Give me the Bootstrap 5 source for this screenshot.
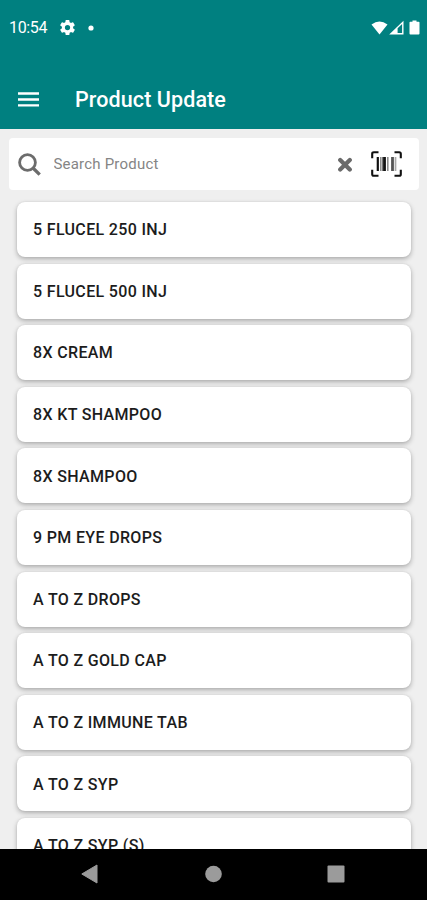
<!DOCTYPE html>
<html lang="en">
<head>
<meta charset="utf-8">
<meta name="viewport" content="width=device-width, initial-scale=1">
<title>Product Update</title>
<link href="https://cdn.jsdelivr.net/npm/bootstrap@5.3.0/dist/css/bootstrap.min.css" rel="stylesheet">
<style>
body{font-family:Roboto,"Liberation Sans",sans-serif;background:#efefef}
.screen{height:900px;width:427px}
.top-area{background:#008080;height:128.5px}
.status-row{height:55px;padding:0 6px 0 9px}
.clock{font-size:16px;letter-spacing:-.35px;width:51px;line-height:20px}
.status-dot{margin-left:13px}
.title-row{height:73px;padding:16px 19px 0 18px}
.page-title{font-size:21.5px;font-weight:500;line-height:28px;margin-left:36px;letter-spacing:.1px}
.search-box{height:52px;margin:9.5px 8px 0 9px;border-radius:4px;padding:0 17px 0 9px}
.search-box input{font-size:15px;letter-spacing:.2px;color:#777;line-height:20px;margin-left:12.5px}
.search-box input::placeholder{color:#858585;opacity:1}
.clear-icon{margin-right:18px}
.product-list{padding:12px 16px 0 17px;gap:6.6px;min-height:0}
.product{height:55px;border-radius:8px;padding:1.4px 0 0 16px;font-size:16px;font-weight:500;letter-spacing:.34px;color:#1c1c1c;box-shadow:0 2px 5px rgba(0,0,0,.28),0 0 2px rgba(0,0,0,.08)}
.system-nav{height:51px;padding:0 82px 1px 81px;background:#000}
</style>
</head>
<body>
<div class="screen d-flex flex-column overflow-hidden">
  <header class="top-area flex-shrink-0 text-white">
    <div class="status-row d-flex align-items-center">
      <span class="clock">10:54</span>
      <svg width="15" height="15" viewBox="2 2 20 20" fill="#fff"><path d="M19.4 13a7.500 7.500 0 0 0 0-2l2.100-1.650a.5.5 0 0 0 .12-.64l-2-3.460a.5.5 0 0 0-.61-.22l-2.490 1a7.300 7.300 0 0 0-1.690-.98l-.38-2.650A.5.5 0 0 0 14 2h-4a.5.5 0 0 0-.49.42l-.38 2.650c-.61.250-1.170.590-1.690.980l-2.490-1a.5.5 0 0 0-.61.220l-2 3.460a.5.5 0 0 0 .12.640L4.600 11a7.500 7.500 0 0 0 0 2l-2.140 1.650a.5.5 0 0 0-.12.640l2 3.460c.12.220.39.300.61.220l2.490-1c.52.400 1.080.730 1.690.980l.38 2.650c.03.240.24.400.49.400h4c.25 0 .46-.18.49-.42l.38-2.650c.61-.25 1.170-.59 1.690-.98l2.490 1c.23.090.49 0 .61-.22l2-3.460a.5.5 0 0 0-.12-.64zM12 15.500a3.500 3.500 0 1 1 0-7 3.500 3.500 0 0 1 0 7z" fill-rule="evenodd"/></svg>
      <svg class="status-dot" width="6" height="6"><circle cx="3" cy="3" r="2.600" fill="#fff"/></svg>
      <svg class="ms-auto" width="50" height="16" viewBox="0 0 50 16" fill="#fff"><path d="M.5 4.500Q8.500-1.500 16.500 4.500L8.500 14.500z"/><path fill-rule="evenodd" d="M32.500.7V14.500H18.200zM26.600 8.300V13h4.500V4z"/><path d="M41.500.5h4v1.300h2.200q.8 0 .8.800v11q0 .9-.9.900h-8.200q-.9 0-.9-.9v-11q0-.8.8-.8h2.200z"/></svg>
    </div>
    <div class="title-row d-flex align-items-center">
      <svg width="21" height="15" viewBox="0 0 21 15" stroke="#fff" stroke-width="2.300"><path d="M0 1.500h21M0 7.500h21M0 13.300h21"/></svg>
      <h1 class="page-title mb-0">Product Update</h1>
    </div>
  </header>
  <div class="search-box d-flex align-items-center bg-white flex-shrink-0">
    <svg width="23" height="24" viewBox="0 0 23 24" fill="none" stroke="#6c6c6c"><circle cx="9.500" cy="10.500" r="7.900" stroke-width="2.800"/><path d="M15 16l6.700 6.700" stroke-width="3.300"/></svg>
    <input class="border-0 p-0 bg-transparent flex-grow-1" type="text" placeholder="Search Product" aria-label="Search Product">
    <svg class="clear-icon" width="16" height="16" viewBox="0 0 16 16" stroke="#6a6a6a" stroke-width="4.200" stroke-linecap="round"><path d="M3.200 4l9.600 9.600M12.800 4l-9.600 9.600"/></svg>
    <svg width="31" height="26" viewBox="0 0 31 26" fill="none"><path d="M1.200 7.200V2.800q0-1.600 1.600-1.600H7.500M23.500 1.200h4.700q1.600 0 1.600 1.600v4.400M29.800 18.800v4.400q0 1.600-1.600 1.600h-4.700M7.500 24.800H2.800q-1.600 0-1.600-1.600v-4.400" stroke="#111" stroke-width="2.100"/><path d="M6.800 6v14" stroke="#111" stroke-width="2.200"/><path d="M9.800 6v14M16.800 6v14" stroke="#888" stroke-width="1.500"/><path d="M13.500 6v14" stroke="#111" stroke-width="2.800"/><path d="M11.500 6v14" stroke="#777" stroke-width="1"/><path d="M21.500 6v14" stroke="#555" stroke-width="2.800"/><path d="M24.500 6v14" stroke="#aaa" stroke-width="1.700"/></svg>
  </div>
  <main class="product-list d-flex flex-column flex-grow-1 overflow-hidden">
    <div class="product bg-white d-flex align-items-center flex-shrink-0">5 FLUCEL 250 INJ</div>
    <div class="product bg-white d-flex align-items-center flex-shrink-0">5 FLUCEL 500 INJ</div>
    <div class="product bg-white d-flex align-items-center flex-shrink-0">8X CREAM</div>
    <div class="product bg-white d-flex align-items-center flex-shrink-0">8X KT SHAMPOO</div>
    <div class="product bg-white d-flex align-items-center flex-shrink-0">8X SHAMPOO</div>
    <div class="product bg-white d-flex align-items-center flex-shrink-0">9 PM EYE DROPS</div>
    <div class="product bg-white d-flex align-items-center flex-shrink-0">A TO Z DROPS</div>
    <div class="product bg-white d-flex align-items-center flex-shrink-0">A TO Z GOLD CAP</div>
    <div class="product bg-white d-flex align-items-center flex-shrink-0">A TO Z IMMUNE TAB</div>
    <div class="product bg-white d-flex align-items-center flex-shrink-0">A TO Z SYP</div>
    <div class="product bg-white d-flex align-items-center flex-shrink-0">A TO Z SYP (S)</div>
  </main>
  <nav class="system-nav d-flex align-items-center justify-content-between flex-shrink-0" aria-label="System">
    <svg width="17" height="20" viewBox="0 0 17 20"><path d="M.8 10L16 1v18z" fill="#9b9b9b" stroke="#9b9b9b" stroke-linejoin="round"/></svg>
    <svg width="18" height="18"><circle cx="9.500" cy="9" r="8.300" fill="#9b9b9b"/></svg>
    <svg width="18" height="18"><rect x=".5" y=".5" width="17" height="17" rx="1" fill="#9b9b9b"/></svg>
  </nav>
</div>
<script src="https://cdn.jsdelivr.net/npm/bootstrap@5.3.0/dist/js/bootstrap.bundle.min.js"></script>
</body>
</html>
